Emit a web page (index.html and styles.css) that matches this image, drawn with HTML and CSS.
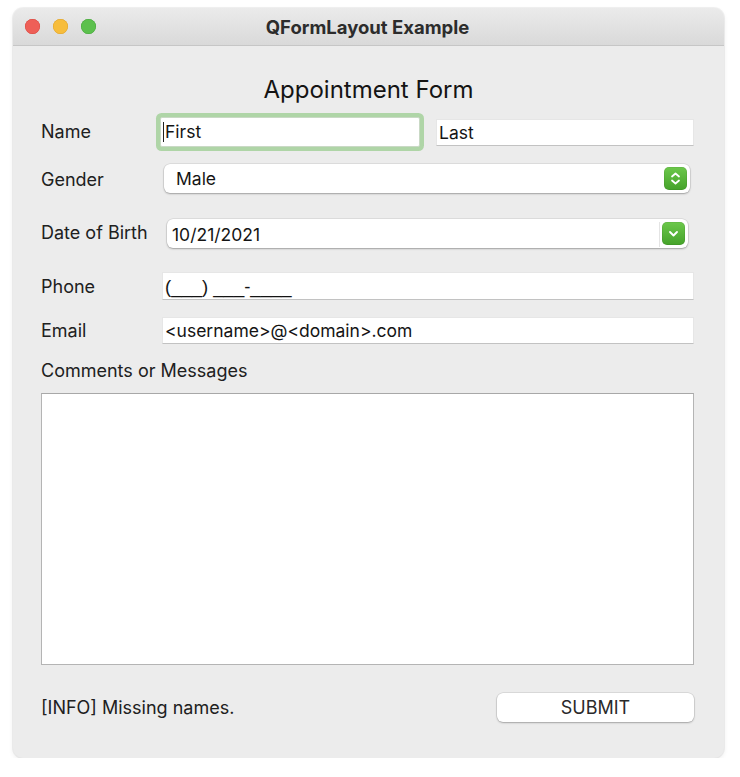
FILE: index.html
```html
<!DOCTYPE html>
<html>
<head>
<meta charset="utf-8">
<link rel="stylesheet" href="styles.css">
</head>
<body>
<div class="window">
  <div class="titlebar">
    <div class="lights">
      <span class="light red"></span>
      <span class="light yellow"></span>
      <span class="light green"></span>
    </div>
    <div class="title">QFormLayout Example</div>
  </div>
  <div class="content">
    <div class="heading">Appointment Form</div>

    <div class="row row-name">
      <div class="label">Name</div>
      <div class="field-col name-fields">
        <div class="edit first focused"><span class="caret"></span>First</div>
        <div class="edit last">Last</div>
      </div>
    </div>

    <div class="row row-gender">
      <div class="label">Gender</div>
      <div class="field-col">
        <div class="combo">
          <span class="combo-text">Male</span>
          <span class="gbtn">
            <svg width="23" height="23" viewBox="0 0 23 23"><path d="M8 9.5 L11.5 6.5 L15 9.5" fill="none" stroke="#fff" stroke-width="1.8" stroke-linecap="round" stroke-linejoin="round"/><path d="M8 13.5 L11.5 16.5 L15 13.5" fill="none" stroke="#fff" stroke-width="1.8" stroke-linecap="round" stroke-linejoin="round"/></svg>
          </span>
        </div>
      </div>
    </div>

    <div class="row row-date">
      <div class="label">Date of Birth</div>
      <div class="field-col">
        <div class="date">
          <span class="date-text">10/21/2021</span>
          <span class="gbtn">
            <svg width="23" height="23" viewBox="0 0 23 23"><path d="M8 10 L11.5 13.5 L15 10" fill="none" stroke="#fff" stroke-width="1.9" stroke-linecap="round" stroke-linejoin="round"/></svg>
          </span>
        </div>
      </div>
    </div>

    <div class="row row-phone">
      <div class="label">Phone</div>
      <div class="field-col">
        <div class="edit wide mask">(___) ___-____</div>
      </div>
    </div>

    <div class="row row-email">
      <div class="label">Email</div>
      <div class="field-col">
        <div class="edit wide">&lt;username&gt;@&lt;domain&gt;.com</div>
      </div>
    </div>

    <div class="comments-label">Comments or Messages</div>
    <div class="textarea"></div>

    <div class="bottom">
      <div class="info">[INFO] Missing names.</div>
      <div class="button">SUBMIT</div>
    </div>
  </div>
</div>
</body>
</html>
```

FILE: styles.css
```css
* { box-sizing: border-box; }
html, body { margin: 0; padding: 0; background: #ffffff; }
body {
  font-family: Inter, "Liberation Sans", sans-serif;
  color: #1e1e1e;
  padding: 8px 0 0 13px;
}
.window {
  width: 711px;
  height: 750px;
  background: #ececec;
  border-radius: 10px;
  overflow: hidden;
  box-shadow: 0 0 0 1px rgba(0,0,0,0.05), 0 2px 5px rgba(0,0,0,0.08);
  display: flex;
  flex-direction: column;
}
.titlebar {
  height: 38px;
  flex: none;
  background: linear-gradient(#ebebeb, #d9d9d9);
  border-bottom: 1px solid #c6c6c6;
  position: relative;
  display: flex;
  align-items: center;
  justify-content: center;
}
.lights {
  position: absolute;
  left: 12px;
  top: 11px;
  display: flex;
  gap: 13px;
}
.light {
  width: 15px;
  height: 15px;
  border-radius: 50%;
  display: block;
}
.red { background: #ee5f57; box-shadow: inset 0 0 0 0.5px #d8453d; }
.yellow { background: #f7bd3c; box-shadow: inset 0 0 0 0.5px #dea22a; }
.green { background: #5cc04d; box-shadow: inset 0 0 0 0.5px #44a53a; }
.title {
  font-weight: 700;
  font-size: 18.5px;
  color: #2c2c2c;
  margin-left: -2px;
}
.content {
  flex: 1;
  padding: 30px 30px 0 28px;
  display: flex;
  flex-direction: column;
}
.heading {
  height: 28px;
  line-height: 28px;
  text-align: center;
  font-size: 24px;
  color: #141414;
  padding-left: 2px;
}
.row {
  display: flex;
  align-items: center;
}
.label {
  width: 115px;
  flex: none;
  font-size: 18px;
  color: #202020;
  white-space: nowrap;
}
.field-col {
  flex: 1;
  display: flex;
  align-items: center;
}
.row-name { margin-top: 8px; height: 39px; }
.row-gender { margin-top: 12px; height: 30px; }
.row-date { margin-top: 26px; height: 29px; }
.row-phone { margin-top: 24px; height: 28px; }
.row-email { margin-top: 17px; height: 27px; }

.row-name .label { margin-top: 0; }
.row-gender .label { margin-top: 2px; }
.row-date .label { margin-top: -2px; }

.edit {
  background: #ffffff;
  height: 27px;
  font-size: 17.5px;
  line-height: 26px;
  padding-left: 2px;
  border: 1px solid #e6e6e6;
  border-bottom-color: #c2c2c2;
  color: #141414;
  white-space: nowrap;
}
.name-fields { gap: 0; }
.edit.first {
  width: 260px;
  height: 30px;
  margin-left: 4px;
  border: 1px solid #c9d9c5;
  border-radius: 2px;
  box-shadow: 0 0 0 4px #afd5a7;
  line-height: 28px;
  display: flex;
  align-items: center;
}
.caret {
  width: 1px;
  height: 20px;
  background: #222;
  display: inline-block;
  margin-right: 1px;
}
.edit.last {
  margin-left: 16px;
  width: 258px;
  padding-left: 2px;
  margin-top: 1px;
}
.edit.wide {
  margin-left: 6px;
  flex: 1;
}
.edit.mask { font-family: "Liberation Sans", Arial, sans-serif; font-size: 18.5px; }
.row-phone .edit { height: 28px; line-height: 27px; }

.combo {
  margin-left: 8px;
  width: 526px;
  height: 29px;
  background: #ffffff;
  border-radius: 6px;
  box-shadow: 0 0 0 0.5px rgba(0,0,0,0.12), 0 1px 2px rgba(0,0,0,0.28);
  display: flex;
  align-items: center;
  justify-content: space-between;
  padding: 0 3px 0 12px;
  font-size: 17.5px;
  color: #141414;
}
.gbtn {
  width: 23px;
  height: 23px;
  border-radius: 5px;
  background: linear-gradient(#6cc84b, #45a22a);
  box-shadow: inset 0 0 0 0.5px rgba(0,0,0,0.12);
  display: block;
  flex: none;
}
.gbtn svg { display: block; }

.date {
  margin-left: 11px;
  width: 521px;
  height: 29px;
  background: #ffffff;
  border-radius: 6px;
  box-shadow: 0 0 0 0.5px rgba(0,0,0,0.12), 0 1px 2px rgba(0,0,0,0.28);
  display: flex;
  align-items: center;
  padding: 0 3px 0 5px;
  font-size: 17.5px;
  color: #141414;
}
.date-text {
  flex: 1;
  height: 25px;
  line-height: 25px;
  border-right: 1px solid #e4e4e4;
  margin-right: 2px;
  margin-top: 1px;
}

.comments-label {
  margin-top: 17px;
  height: 20px;
  line-height: 20px;
  font-size: 18px;
  color: #202020;
}
.textarea {
  margin-top: 12px;
  height: 272px;
  background: #ffffff;
  border: 1px solid #b4b4b4;
  border-top-color: #a8a8a8;
}
.bottom {
  margin-top: 28px;
  height: 29px;
  display: flex;
  align-items: center;
  justify-content: space-between;
}
.info {
  font-size: 18px;
  color: #202020;
}
.button {
  width: 197px;
  height: 29px;
  background: #ffffff;
  border-radius: 6px;
  box-shadow: 0 0 0 0.5px rgba(0,0,0,0.14), 0 1px 2px rgba(0,0,0,0.25);
  text-align: center;
  line-height: 29px;
  font-size: 18px;
  color: #2a2a2a;
}
```
